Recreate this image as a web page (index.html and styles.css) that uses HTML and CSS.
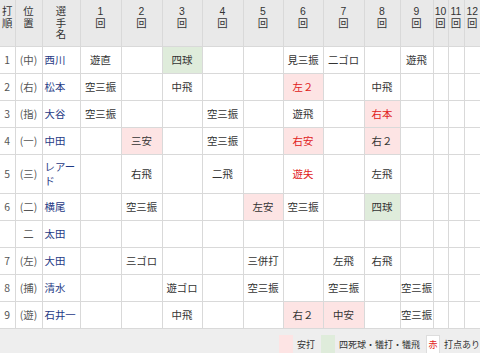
FILE: index.html
```html
<!DOCTYPE html>
<html lang="ja">
<head>
<meta charset="utf-8">
<title>打撃成績</title>
<link rel="stylesheet" href="styles.css">
</head>
<body>
<div class="page">
  <table class="score">
    <colgroup>
      <col class="c-order"><col class="c-pos"><col class="c-name">
      <col class="c41"><col class="c41"><col class="c40"><col class="c41"><col class="c40">
      <col class="c40"><col class="c41"><col class="c36"><col class="c33">
      <col class="c15"><col class="c16"><col class="c16">
    </colgroup>
    <thead>
      <tr>
        <th>打<br>順</th><th>位<br>置</th><th>選<br>手<br>名</th>
        <th>1<br>回</th><th>2<br>回</th><th>3<br>回</th><th>4<br>回</th><th>5<br>回</th>
        <th>6<br>回</th><th>7<br>回</th><th>8<br>回</th><th>9<br>回</th>
        <th>10<br>回</th><th>11<br>回</th><th>12<br>回</th>
      </tr>
    </thead>
    <tbody>
      <tr>
        <td class="ord">1</td><td class="pos">(中)</td><td class="name">西川</td>
        <td>遊直</td><td></td><td class="walk">四球</td><td></td><td></td>
        <td>見三振</td><td>二ゴロ</td><td></td><td>遊飛</td><td></td><td></td><td></td>
      </tr>
      <tr>
        <td class="ord">2</td><td class="pos">(右)</td><td class="name">松本</td>
        <td>空三振</td><td></td><td>中飛</td><td></td><td></td>
        <td class="hit rbi">左２</td><td></td><td>中飛</td><td></td><td></td><td></td><td></td>
      </tr>
      <tr>
        <td class="ord">3</td><td class="pos">(指)</td><td class="name">大谷</td>
        <td>空三振</td><td></td><td></td><td>空三振</td><td></td>
        <td>遊飛</td><td></td><td class="hit rbi">右本</td><td></td><td></td><td></td><td></td>
      </tr>
      <tr>
        <td class="ord">4</td><td class="pos">(一)</td><td class="name">中田</td>
        <td></td><td class="hit">三安</td><td></td><td>空三振</td><td></td>
        <td class="hit rbi">右安</td><td></td><td class="hit">右２</td><td></td><td></td><td></td><td></td>
      </tr>
      <tr class="tall">
        <td class="ord">5</td><td class="pos">(三)</td><td class="name">レアー<br>ド</td>
        <td></td><td>右飛</td><td></td><td>二飛</td><td></td>
        <td class="rbi">遊失</td><td></td><td>左飛</td><td></td><td></td><td></td><td></td>
      </tr>
      <tr>
        <td class="ord">6</td><td class="pos">(二)</td><td class="name">横尾</td>
        <td></td><td>空三振</td><td></td><td></td><td class="hit">左安</td>
        <td>空三振</td><td></td><td class="walk">四球</td><td></td><td></td><td></td><td></td>
      </tr>
      <tr>
        <td class="ord"></td><td class="pos">二</td><td class="name">太田</td>
        <td></td><td></td><td></td><td></td><td></td>
        <td></td><td></td><td></td><td></td><td></td><td></td><td></td>
      </tr>
      <tr>
        <td class="ord">7</td><td class="pos">(左)</td><td class="name">大田</td>
        <td></td><td>三ゴロ</td><td></td><td></td><td>三併打</td>
        <td></td><td>左飛</td><td>右飛</td><td></td><td></td><td></td><td></td>
      </tr>
      <tr>
        <td class="ord">8</td><td class="pos">(捕)</td><td class="name">清水</td>
        <td></td><td></td><td>遊ゴロ</td><td></td><td>空三振</td>
        <td></td><td>空三振</td><td></td><td>空三振</td><td></td><td></td><td></td>
      </tr>
      <tr>
        <td class="ord">9</td><td class="pos">(遊)</td><td class="name">石井一</td>
        <td></td><td></td><td>中飛</td><td></td><td></td>
        <td class="hit">右２</td><td class="hit">中安</td><td></td><td>空三振</td><td></td><td></td><td></td>
      </tr>
    </tbody>
  </table>
  <div class="legend">
    <span class="swatch sw-hit"></span><span class="lg-text">安打</span>
    <span class="swatch sw-walk"></span><span class="lg-text">四死球・犠打・犠飛</span>
    <span class="swatch sw-rbi">赤</span><span class="lg-text">打点あり</span>
  </div>
</div>
</body>
</html>
```

FILE: styles.css
```css
html, body {
  margin: 0;
  padding: 0;
  background: #eeeeee;
}
body {
  width: 480px;
  height: 353px;
  overflow: hidden;
  font-family: "Noto Sans CJK JP", "Noto Sans", sans-serif;
  color: #333333;
}
.page {
  width: 480px;
}
.score {
  width: 480px;
  table-layout: fixed;
  border-collapse: collapse;
  background: #ffffff;
  font-size: 10.4px;
}
.c-order { width: 15px; }
.c-pos { width: 27px; }
.c-name { width: 38px; }
.c41 { width: 41px; }
.c40 { width: 40px; }
.c36 { width: 36px; }
.c33 { width: 33px; }
.c15 { width: 15px; }
.c16 { width: 16px; }

.score th,
.score td {
  border: 1px solid #d9d9d9;
  padding: 0;
  text-align: center;
  white-space: nowrap;
  overflow: hidden;
}
.score tr > :first-child { border-left: none; }
.score tr > :last-child { border-right: none; }
.score thead tr > th { border-top: none; }

.score th {
  background: #e9e9e9;
  height: 46px;
  vertical-align: top;
  padding-top: 6px;
  font-family: "Liberation Sans", "Noto Sans CJK JP", sans-serif;
  line-height: 11.6px;
  font-weight: normal;
  color: #333333;
  box-sizing: border-box;
}
.score td {
  height: 26px;
  line-height: 14px;
  vertical-align: middle;
}
.score tr.tall td { height: 38px; }
.score td.ord,
.score td.pos {
  color: #555555;
}
.score td.name {
  text-align: left;
  padding-left: 2px;
  color: #1f3a85;
  white-space: normal;
}
.score td.hit { background: #fde4e4; }
.score td.walk { background: #dfecdb; }
.score td.rbi { color: #e02020; }

.legend {
  display: flex;
  justify-content: flex-end;
  align-items: center;
  padding-top: 6px;
  font-size: 9px;
  color: #333333;
}
.swatch {
  display: inline-block;
  width: 14px;
  height: 20px;
  box-sizing: border-box;
  margin-right: 4px;
}
.lg-text {
  margin-right: 6px;
  line-height: 20px;
}
.lg-text:last-child { margin-right: 0; }
.sw-hit { background: #fde4e4; }
.sw-walk { background: #dfecdb; }
.sw-rbi {
  width: 14px;
  background: #ffffff;
  border: 1px solid #dddddd;
  color: #e02020;
  font-size: 9px;
  line-height: 18px;
  text-align: center;
  overflow: hidden;
}
```
